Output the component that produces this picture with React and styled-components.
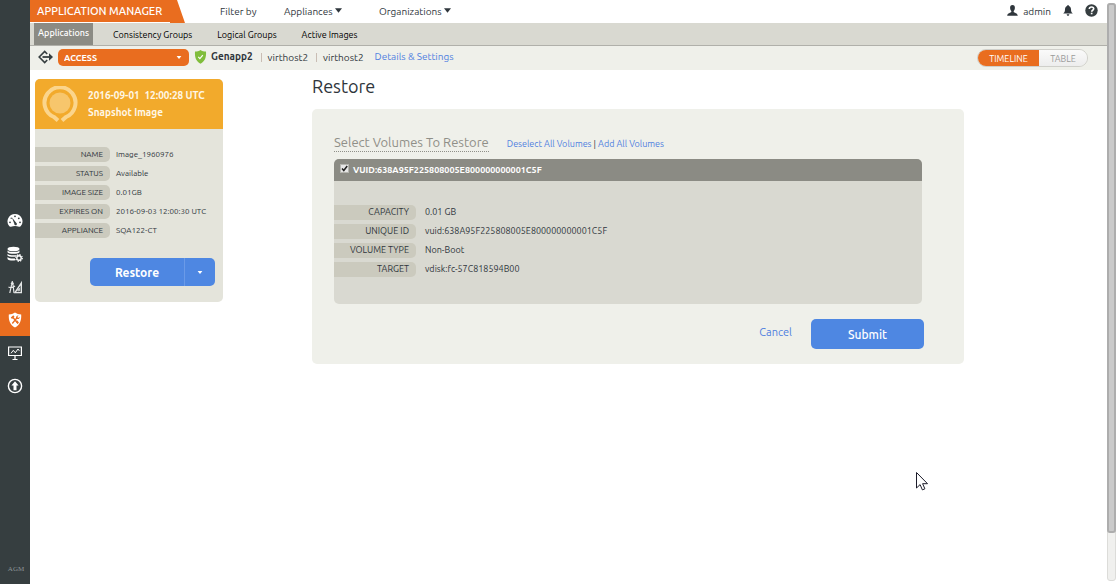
import React, { useState } from "react";
import styled, { createGlobalStyle, ThemeProvider } from "styled-components";

const theme = {
    orange: "#e96d1f",
    amber: "#f2aa2c",
    blue: "#4e87e2",
    link: "#5080e0",
    text: "#2f363c",
    dark: "#363e40",
    grey: "#8b8b84",
    bar: "#d9d9d1",
    panel: "#eff0ea",
    card: "#e4e4db",
    pill: "#cbcabe"
};

const GlobalStyle = createGlobalStyle`
    * {
        box-sizing: border-box;
    }
    body {
        margin: 0;
        background-color: white;
        color: ${theme.text};
        font-family: Ubuntu, "Noto Sans", "Open Sans", sans-serif;
        font-size: 10px;
        line-height: 14px;
    }
    button, select, input {
        font-family: inherit;
        margin: 0;
    }
    a {
        text-decoration: none;
    }
    svg {
        display: block;
        flex: none;
    }
`;

const Page = styled.div`
    display: flex;
    min-height: 100vh;
`;

const Sidebar = styled.nav`
    display: flex;
    flex-direction: column;
    flex: none;
    width: 30px;
    padding: 204px 0 9px;
    background-color: ${props => props.theme.dark};
`;

const SideLink = styled.a`
    display: flex;
    align-items: center;
    justify-content: center;
    height: 33px;
    color: white;
    background-color: ${props => (props.$active ? props.theme.orange : "transparent")};
`;

const SideMark = styled.span`
    margin-top: auto;
    padding-left: 2px;
    text-align: center;
    font-family: "Liberation Serif", serif;
    font-size: 7px;
    line-height: 12px;
    color: #8d9496;
`;

const Body = styled.div`
    flex: 1;
    min-width: 0;
`;

const Header = styled.header`
    display: flex;
    align-items: center;
    height: 23px;
    padding-right: 9px;
`;

const Brand = styled.h1`
    align-self: stretch;
    flex: none;
    width: 155px;
    margin: 0 35px 0 0;
    padding-left: 7px;
    font-size: 11px;
    font-weight: 500;
    line-height: 22px;
    white-space: nowrap;
    color: white;
    background: linear-gradient(white, white) 0 22px / 140px 1px no-repeat ${props => props.theme.orange};
    clip-path: polygon(0 0, 147px 0, 100% 100%, 0 100%);
`;

const FilterLabel = styled.span`
    width: 64px;
`;

const MenuButton = styled.button`
    display: flex;
    align-items: center;
    gap: 2px;
    width: ${props => props.$width};
    padding: 0;
    border: 0;
    background: none;
    color: inherit;
    font-size: 10px;
    line-height: 14px;
    svg {
        margin-bottom: 2px;
    }
`;

const Account = styled.div`
    display: flex;
    align-items: center;
    margin-left: auto;
    gap: 12px;
`;

const AccountLink = styled.a`
    display: flex;
    align-items: center;
    gap: 5px;
    color: inherit;
    svg {
        margin-bottom: 2px;
    }
`;

const Tabs = styled.nav`
    display: flex;
    gap: 5px;
    height: 23px;
    padding-left: 4px;
    background-color: ${props => props.theme.bar};
    border-bottom: 1px solid #b0b0aa;
`;

const Tab = styled.a`
    padding: ${props => (props.$active ? "3px 4px" : "5px 10px")};
    margin-right: ${props => (props.$active ? "5px" : 0)};
    font-size: 9px;
    font-weight: ${props => (props.$active ? 500 : 400)};
    color: ${props => (props.$active ? "white" : "#000")};
    background-color: ${props => (props.$active ? props.theme.grey : "transparent")};
`;

const SubBar = styled.div`
    display: flex;
    align-items: center;
    height: 24px;
    padding: 0 19px 2px 8px;
    background-color: ${props => props.theme.panel};
`;

const AccessField = styled.div`
    display: grid;
    align-items: center;
    width: 131px;
    margin: 1px 5px 0;
    color: white;
    & > * {
        grid-area: 1 / 1;
    }
    svg {
        justify-self: end;
        margin-right: 7px;
        pointer-events: none;
    }
`;

const AccessSelect = styled.select`
    appearance: none;
    width: 100%;
    height: 17px;
    padding: 0 6px;
    border: 0;
    border-radius: 5px;
    background-color: ${props => props.theme.orange};
    color: white;
    font-size: 9px;
    font-weight: 700;
`;

const Crumbs = styled.div`
    display: flex;
    align-items: center;
    padding-left: 4px;
    white-space: nowrap;
    strong {
        font-weight: 700;
    }
    & > span {
        margin-left: 8px;
        padding-left: 6px;
        border-left: 1px solid #c9bdb4;
        line-height: 9px;
    }
    a {
        margin-left: 11px;
        color: ${props => props.theme.link};
    }
`;

const Toggle = styled.div`
    display: flex;
    height: 18px;
    margin: 2px 0 0 auto;
    border: 1px solid #cfcfca;
    border-radius: 9px;
    overflow: hidden;
`;

const ToggleButton = styled.button`
    width: ${props => (props.$on ? "61px" : "48px")};
    padding: 0;
    border: 0;
    font-size: 9px;
    line-height: 18px;
    color: ${props => (props.$on ? "white" : "#9a9a9a")};
    background: ${props => (props.$on ? props.theme.orange : "linear-gradient(#fafafa, #ededed)")};
`;

const Content = styled.main`
    display: flex;
    align-items: flex-start;
    gap: 89px;
    padding: 9px 143px 20px 5px;
`;

const Card = styled.aside`
    flex: none;
    width: 188px;
    padding-bottom: 16px;
    border-radius: 5px;
    overflow: hidden;
    background-color: ${props => props.theme.card};
`;

const CardHeader = styled.div`
    display: flex;
    align-items: center;
    gap: 10px;
    height: 50px;
    padding-left: 7px;
    font-size: 10px;
    font-weight: 700;
    line-height: 17px;
    white-space: pre;
    color: #fff7e6;
    background-color: ${props => props.theme.amber};
`;

const Facts = styled.dl`
    display: grid;
    grid-template-columns: ${props => props.$label} 1fr;
    row-gap: 4px;
    column-gap: ${props => props.$gap};
    margin: 0;
    padding: ${props => props.$pad};
    font-size: ${props => props.$size};
    line-height: 15px;
    white-space: nowrap;
    dt {
        padding-right: 7px;
        border-radius: 0 5px 5px 0;
        text-align: right;
        background-color: ${props => props.theme.pill};
    }
    dd {
        margin: 0;
    }
`;

const SplitButton = styled.div`
    display: flex;
    width: 125px;
    margin: 20px 8px 0 auto;
    border-radius: 5px;
    overflow: hidden;
`;

const Button = styled.button`
    display: flex;
    align-items: center;
    justify-content: center;
    width: ${props => props.$width};
    height: ${props => props.$height || "28px"};
    padding: 0;
    border: 0;
    border-radius: ${props => props.$radius || 0};
    border-left: ${props => (props.$split ? "1px solid #6a9ae8" : 0)};
    background-color: ${props => props.theme.blue};
    color: white;
    font-size: 12px;
    font-weight: ${props => props.$weight || 500};
`;

const Restore = styled.section`
    flex: 1;
    min-width: 0;
    max-width: 652px;
`;

const Title = styled.h2`
    margin: -5px 0 11px;
    font-size: 18px;
    font-weight: 400;
    line-height: 24px;
`;

const Panel = styled.form`
    padding: 24px 40px 15px 22px;
    border-radius: 5px;
    background-color: ${props => props.theme.panel};
`;

const PanelHead = styled.div`
    display: flex;
    align-items: center;
    gap: 18px;
    margin-bottom: 7px;
    white-space: nowrap;
`;

const PanelTitle = styled.h3`
    margin: 0;
    border-bottom: 1px dotted #8f8f88;
    font-size: 13px;
    font-weight: 400;
    line-height: 18px;
    color: #8f8f88;
`;

const PanelLinks = styled.div`
    padding-top: 3px;
    font-size: 9px;
    a {
        color: ${props => props.theme.link};
    }
`;

const Volume = styled.div`
    margin-right: 2px;
    border-radius: 5px;
    overflow: hidden;
    background-color: ${props => props.theme.bar};
`;

const VolumeHead = styled.label`
    display: flex;
    align-items: center;
    gap: 4px;
    height: 22px;
    padding-left: 6px;
    font-size: 9px;
    font-weight: 700;
    color: white;
    background-color: ${props => props.theme.grey};
`;

const CheckBox = styled.span`
    display: grid;
    margin-bottom: 4px;
    input {
        grid-area: 1 / 1;
        appearance: none;
        width: 9px;
        height: 9px;
        border: 1px solid #b5b5b0;
        background-color: #e6e6e6;
    }
    svg {
        grid-area: 1 / 1;
        visibility: hidden;
        pointer-events: none;
    }
    input:checked + svg {
        visibility: visible;
    }
`;

const Actions = styled.div`
    display: flex;
    align-items: center;
    justify-content: flex-end;
    gap: 19px;
    margin-top: 15px;
    a {
        padding-bottom: 4px;
        font-size: 11px;
        color: ${props => props.theme.link};
    }
`;

const ScrollTrack = styled.div`
    flex: none;
    width: 9px;
    height: calc(100vh - 6px);
    margin-top: 3px;
    border: 1px solid #dcdcd9;
    border-radius: 3px;
    background-color: #f0f0ee;
`;

const ScrollThumb = styled.div`
    height: 92%;
    margin: -1px;
    border: 2px solid #adadad;
    border-radius: 3px;
    background-color: #cacaca;
`;

// the pointer floats over the page
const Pointer = styled.svg`
    position: absolute;
    left: 916px;
    top: 472px;
    pointer-events: none;
`;

const Caret = ({ width = 7, height = 5 }) => (
    <svg width={width} height={height} viewBox="0 0 8 5" fill="currentColor">
        <path d="M0 0h8L4 5z" />
    </svg>
);

const GaugeIcon = () => (
    <svg width="16" height="16" viewBox="0 0 16 16">
        <path fill="#fff" d="M8 1a7.4 7.4 0 0 0-6 11.8c.5.8 1.2 1.2 2 .9 2.600-.9 5.400-.9 8 0 .8.300 1.500-.1 2-.9A7.400 7.400 0 0 0 8 1z" />
        <g fill="#363e40">
            <circle cx="3" cy="9.300" r=".9" />
            <circle cx="4.200" cy="5.300" r=".7" />
            <circle cx="8" cy="3.300" r=".9" />
            <circle cx="11.800" cy="5.300" r=".9" />
            <circle cx="13" cy="9.300" r=".9" />
            <path d="M4.800 4.300l4.400 5.500a1.300 1.300 0 1 1-1.900 1z" />
        </g>
    </svg>
);

const DatabaseIcon = () => (
    <svg width="16" height="16" viewBox="0 0 16 16">
        <g fill="#fff">
            <ellipse cx="6.500" cy="3" rx="6" ry="2.300" />
            <path d="M.5 4.600c1.500 2 10.500 2 12 0v1.700c-1.500 2-10.500 2-12 0z" />
            <path d="M.5 7.800c1.500 2 10.500 2 12 0v1c-2 0-3.500.8-4 1.900-3.300.3-7.200 0-8-1.200z" />
            <path d="M.5 11c1.500 1.500 5 1.700 7.400 1.400l.5 1.900c-3 .5-7 .2-7.900-1.300z" />
        </g>
        <circle cx="12" cy="12" r="2.200" fill="none" stroke="#fff" strokeWidth="1.400" />
        <circle cx="12" cy="12" r="3.300" fill="none" stroke="#fff" strokeWidth="1.200" strokeDasharray="1.300 1.290" />
    </svg>
);

const DraftIcon = () => (
    <svg width="16" height="16" viewBox="0 0 16 16" fill="none" stroke="#e4e6e6">
        <path strokeWidth="1.200" d="M4.600 5.500L2.800 14M6 5.500l1 8.500M1.500 8c2 1 4.500.6 6.500-1M5.300 2v2" />
        <circle cx="5.300" cy="4.500" r="1.500" fill="#e4e6e6" stroke="none" />
        <path strokeWidth="1.400" d="M14.300 4v9.600H8z" />
        <path strokeWidth=".9" d="M12.400 9.200v2.600h-1.700z" />
    </svg>
);

const ShieldToolsIcon = () => (
    <svg width="16" height="16" viewBox="0 0 16 16">
        <path fill="#fff" d="M8 .6c1.800 1.300 3.800 1.800 6.200 1.800.3 6-1.200 10.400-6.200 13C3 12.800 1.500 8.400 1.800 2.400 4.200 2.400 6.200 1.900 8 .6z" />
        <path stroke="#e96d1f" strokeWidth="1.300" d="M6 5.500l5 6M10.200 5.500L5.300 11.500" fill="none" />
        <path stroke="#e96d1f" strokeWidth="1.900" d="M4.400 6.200l2.500-2.200M9.300 8.800l1.900 2.400" fill="none" />
        <path fill="#e96d1f" d="M11.600 3.600l-1.300 1.500.8.800 1.500-1.100c.2 1.400-.7 2.500-2.200 2.300L9 5.900c-.1-1.500 1.100-2.700 2.600-2.300z" />
    </svg>
);

const MonitorIcon = () => (
    <svg width="16" height="16" viewBox="0 0 16 16" fill="none" stroke="#fff">
        <path strokeWidth="1.200" d="M1.600 2h12.800v8.500H1.600zM8 10.500v4M5.500 14.500h5" />
        <path strokeWidth="1" d="M4 8.300l2.300-3 2 2.500L11 4l1.300 1.800" />
    </svg>
);

const UploadIcon = () => (
    <svg width="16" height="16" viewBox="0 0 16 16">
        <circle cx="8" cy="8" r="6.600" fill="none" stroke="#fff" strokeWidth="1.400" />
        <path fill="#fff" d="M8 3.200l3.600 4.200H9.500v4.900h-3V7.400H4.400z" />
    </svg>
);

const UserIcon = () => (
    <svg width="11" height="11" viewBox="0 0 11 11" fill="currentColor">
        <path d="M5.500 0c1.700 0 2.500 1.200 2.400 3C7.800 4.500 7.200 5.500 6.700 6v1c.5.900 3.800.9 4.100 3.800H.2C.5 7.900 3.800 7.900 4.300 7V6c-.5-.5-1.100-1.500-1.200-3C3 1.200 3.800 0 5.500 0z" />
    </svg>
);

const BellIcon = () => (
    <svg width="10" height="11" viewBox="0 0 10 11" fill="currentColor">
        <path d="M5 0c.6 0 .8.4.8.9C7.600 1.400 8 3 8 4.600c0 2 .6 3 1.800 4H.2C1.400 7.600 2 6.600 2 4.600 2 3 2.400 1.400 4.200.9c0-.5.2-.9.8-.9zM3.700 9.200h2.600C6.200 10.200 5.700 10.700 5 10.700S3.800 10.200 3.700 9.200z" />
    </svg>
);

const HelpIcon = () => (
    <svg width="13" height="13" viewBox="0 0 13 13">
        <circle cx="6.500" cy="6.500" r="6.200" fill="#363e40" />
        <path d="M4.300 5c.1-1.400 1-2 2.200-2s2.200.7 2.200 1.800c0 1.500-2 1.400-2 3" fill="none" stroke="#fff" strokeWidth="1.600" />
        <path d="M5.800 8.700h1.700v1.600H5.800z" fill="#fff" />
    </svg>
);

const ExitIcon = () => (
    <svg width="15" height="14" viewBox="0 0 15 14" fill="none" stroke="#363e40">
        <path strokeWidth="1.600" d="M9.200 4L6.700 1.500 1.200 7l5.500 5.500L9.200 10" />
        <path strokeWidth="1.800" d="M4.500 7h7" />
        <path fill="#363e40" stroke="none" d="M11 3.200L15 7l-4 3.800z" />
    </svg>
);

const StatusShield = () => (
    <svg width="13" height="14" viewBox="0 0 13 14">
        <path fill="#80bd3c" d="M6.500 0C8 1 9.900 1.600 12 1.600c.4 5.900-1 9.800-5.500 12.200C2 11.400.6 7.500 1 1.600 3.100 1.600 5 1 6.500 0z" />
        <path fill="none" stroke="#fff" strokeWidth="1.200" d="M4.300 6.900l1.600 1.700 2.900-3.400" />
    </svg>
);

const SnapshotIcon = () => (
    <svg width="36" height="36" viewBox="0 0 36 36">
        <path fill="none" stroke="#fbd58c" strokeWidth="4" d="M16 34.500L12 31A15.500 15.500 0 1 1 24 31L20 34.500" />
        <circle cx="18" cy="17" r="10.500" fill="#f7c66c" />
    </svg>
);

const sideItems = [
    ["Dashboard", GaugeIcon],
    ["Domain Manager", DatabaseIcon],
    ["SLA Architect", DraftIcon],
    ["Application Manager", ShieldToolsIcon],
    ["System Monitor", MonitorIcon],
    ["Upgrade", UploadIcon]
];

const imageFacts = [
    ["NAME", "Image_1960976"],
    ["STATUS", "Available"],
    ["IMAGE SIZE", "0.01GB"],
    ["EXPIRES ON", "2016-09-03 12:00:30 UTC"],
    ["APPLIANCE", "SQA122-CT"]
];

const volumeFacts = [
    ["CAPACITY", "0.01 GB"],
    ["UNIQUE ID", "vuid:638A95F225808005E800000000001C5F"],
    ["VOLUME TYPE", "Non-Boot"],
    ["TARGET", "vdisk:fc-57C818594B00"]
];

const FactList = ({ items, ...rest }) => (
    <Facts {...rest}>
        {items.map(([label, value]) => (
            <React.Fragment key={label}>
                <dt>{label}</dt>
                <dd>{value}</dd>
            </React.Fragment>
        ))}
    </Facts>
);

export default () => {
    const [checked, setChecked] = useState(true);
    const [view, setView] = useState("TIMELINE");
    return (
        <ThemeProvider theme={theme}>
            <GlobalStyle />
            <Page>
                <Sidebar>
                    {sideItems.map(([name, Icon]) => (
                        <SideLink
                            key={name}
                            href="#"
                            aria-label={name}
                            $active={name === "Application Manager"}>
                            <Icon />
                        </SideLink>
                    ))}
                    <SideMark>AGM</SideMark>
                </Sidebar>
                <Body>
                    <Header>
                        <Brand>APPLICATION MANAGER</Brand>
                        <FilterLabel>Filter by</FilterLabel>
                        <MenuButton type="button" $width="95px">Appliances<Caret /></MenuButton>
                        <MenuButton type="button" $width="auto">Organizations<Caret /></MenuButton>
                        <Account>
                            <AccountLink href="#"><UserIcon />admin</AccountLink>
                            <AccountLink href="#" aria-label="Notifications"><BellIcon /></AccountLink>
                            <AccountLink href="#" aria-label="Help"><HelpIcon /></AccountLink>
                        </Account>
                    </Header>
                    <Tabs>
                        <Tab href="#" $active>Applications</Tab>
                        <Tab href="#">Consistency Groups</Tab>
                        <Tab href="#">Logical Groups</Tab>
                        <Tab href="#">Active Images</Tab>
                    </Tabs>
                    <SubBar>
                        <ExitIcon />
                        <AccessField>
                            <AccessSelect aria-label="Application action" defaultValue="ACCESS">
                                <option>ACCESS</option>
                            </AccessSelect>
                            <Caret width={6} height={3} />
                        </AccessField>
                        <StatusShield />
                        <Crumbs>
                            <strong>Genapp2</strong>
                            <span>virthost2</span>
                            <span>virthost2</span>
                            <a href="#">Details &amp; Settings</a>
                        </Crumbs>
                        <Toggle>
                            {["TIMELINE", "TABLE"].map(name => (
                                <ToggleButton
                                    key={name}
                                    type="button"
                                    $on={view === name}
                                    onClick={() => setView(name)}>
                                    {name}
                                </ToggleButton>
                            ))}
                        </Toggle>
                    </SubBar>
                    <Content>
                        <Card>
                            <CardHeader>
                                <SnapshotIcon />
                                <div>{"2016-09-01  12:00:28 UTC\nSnapshot Image"}</div>
                            </CardHeader>
                            <FactList items={imageFacts} $label="75px" $gap="6px" $pad="18px 0 0" $size="8px" />
                            <SplitButton>
                                <Button type="button" $width="94px" $weight={700}>Restore</Button>
                                <Button type="button" $width="31px" $split aria-label="More actions">
                                    <Caret width={6} height={3} />
                                </Button>
                            </SplitButton>
                        </Card>
                        <Restore>
                            <Title>Restore</Title>
                            <Panel onSubmit={e => e.preventDefault()}>
                                <PanelHead>
                                    <PanelTitle>Select Volumes To Restore</PanelTitle>
                                    <PanelLinks>
                                        <a href="#">Deselect All Volumes</a> | <a href="#">Add All Volumes</a>
                                    </PanelLinks>
                                </PanelHead>
                                <Volume>
                                    <VolumeHead>
                                        <CheckBox>
                                            <input
                                                type="checkbox"
                                                checked={checked}
                                                onChange={e => setChecked(e.target.checked)} />
                                            <svg width="9" height="9" viewBox="0 0 9 9">
                                                <path d="M2 4.500l1.800 2L7.200 2" fill="none" stroke="#222" strokeWidth="1.500" />
                                            </svg>
                                        </CheckBox>
                                        VUID:638A95F225808005E800000000001C5F
                                    </VolumeHead>
                                    <FactList items={volumeFacts} $label="82px" $gap="9px" $pad="24px 0 27px" $size="9px" />
                                </Volume>
                                <Actions>
                                    <a href="#">Cancel</a>
                                    <Button type="submit" $width="113px" $height="30px" $radius="5px">Submit</Button>
                                </Actions>
                            </Panel>
                        </Restore>
                    </Content>
                </Body>
                <ScrollTrack>
                    <ScrollThumb />
                </ScrollTrack>
            </Page>
            <Pointer width="13" height="20" viewBox="0 0 13 20">
                <path d="M.5.5v15.500l3.600-3.400 2.300 5.300 2.500-1.100-2.300-5.100h4.900z" fill="#fff" stroke="#1c1c2a" />
            </Pointer>
        </ThemeProvider>
    );
};
